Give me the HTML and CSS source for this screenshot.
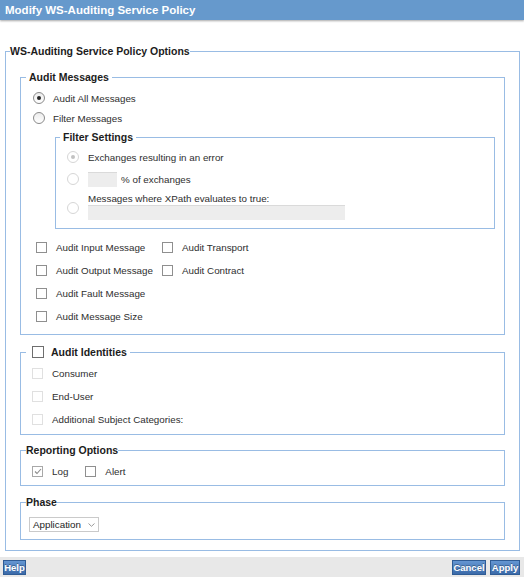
FILE: index.html
```html
<!DOCTYPE html>
<html lang="en">
<head>
<meta charset="utf-8">
<title>Modify WS-Auditing Service Policy</title>
<link rel="stylesheet" href="styles.css">
</head>
<body>
  <div class="titlebar">Modify WS-Auditing Service Policy</div>
  <div class="content">
    <fieldset class="fs outer">
      <legend>WS-Auditing Service Policy Options</legend>
      <div class="outer-body">
        <fieldset class="fs msgs">
          <legend>Audit Messages</legend>
          <div class="msgs-body">
            <div class="row"><span class="radio on"></span><span>Audit All Messages</span></div>
            <div class="row"><span class="radio"></span><span>Filter Messages</span></div>
            <fieldset class="fs filter">
              <legend>Filter Settings</legend>
              <div class="filter-body">
                <div class="frow"><span class="radio dis on"></span><span>Exchanges resulting in an error</span></div>
                <div class="frow"><span class="radio dis"></span><span class="tbox pct"></span><span>% of exchanges</span></div>
                <div class="frow xp"><span class="radio dis"></span><div class="xcol"><span class="xlbl">Messages where XPath evaluates to true:</span><span class="tbox xpbox"></span></div></div>
              </div>
            </fieldset>
            <div class="checks">
              <div class="cb-item"><span class="cb"></span><span>Audit Input Message</span></div>
              <div class="cb-item"><span class="cb"></span><span>Audit Transport</span></div>
              <div class="cb-item"><span class="cb"></span><span>Audit Output Message</span></div>
              <div class="cb-item"><span class="cb"></span><span>Audit Contract</span></div>
              <div class="cb-item c1"><span class="cb"></span><span>Audit Fault Message</span></div>
              <div class="cb-item c1"><span class="cb"></span><span>Audit Message Size</span></div>
            </div>
          </div>
        </fieldset>

        <fieldset class="fs ids">
          <legend><span class="lg-inner"><span class="cb dark"></span><span>Audit Identities</span></span></legend>
          <div class="ids-body">
            <div class="irow"><span class="cb dis"></span><span>Consumer</span></div>
            <div class="irow"><span class="cb dis"></span><span>End-User</span></div>
            <div class="irow"><span class="cb dis"></span><span>Additional Subject Categories:</span></div>
          </div>
        </fieldset>

        <fieldset class="fs rep">
          <legend>Reporting Options</legend>
          <div class="rep-body">
            <div class="cb-item"><span class="cb light"><svg width="8" height="7" viewBox="0 0 8 7"><path d="M1 3.5 L3 5.5 L7 1" fill="none" stroke="#8a8a8a" stroke-width="1.1"/></svg></span><span>Log</span></div>
            <div class="cb-item alert"><span class="cb"></span><span>Alert</span></div>
          </div>
        </fieldset>

        <fieldset class="fs phase">
          <legend>Phase</legend>
          <div class="phase-body">
            <div class="select"><span>Application</span><svg width="7" height="4" viewBox="0 0 7 4"><path d="M0.5 0.5 L3.5 3.3 L6.5 0.5" fill="none" stroke="#9a9a9a" stroke-width="1"/></svg></div>
          </div>
        </fieldset>
      </div>
    </fieldset>
  </div>
  <div class="footer">
    <button class="btn help">Help</button>
    <button class="btn cancel">Cancel</button>
    <button class="btn apply">Apply</button>
  </div>
</body>
</html>
```

FILE: styles.css
```css
html, body {
  margin: 0;
  padding: 0;
}

body {
  width: 524px;
  height: 577px;
  display: flex;
  flex-direction: column;
  font-family: "Liberation Sans", Arial, sans-serif;
  font-size: 9.8px;
  color: #2e2e2e;
  background: #fff;
  overflow: hidden;
}

.titlebar {
  flex: none;
  height: 20px;
  line-height: 20px;
  background: #6699cc;
  color: #fff;
  font-weight: bold;
  font-size: 11.5px;
  padding-left: 5px;
  box-shadow: 0 1px 2px rgba(0, 0, 0, 0.35);
  position: relative;
  z-index: 1;
}

.content {
  flex: none;
  padding-top: 24px;
}

.fs {
  border: 1px solid #99bce4;
  margin: 0;
  padding: 0;
  min-width: 0;
}

.fs > legend {
  padding: 0;
  line-height: 14px;
  font-size: 10.5px;
  font-weight: bold;
  color: #1c1c1c;
}

.outer {
  margin: 0 4px 0 5px;
}

.outer > legend {
  margin-left: 4px;
}

.outer-body {
  padding: 12px 14px 10px;
}

.msgs > legend {
  margin-left: 5px;
  padding: 0 3px;
}

.msgs-body {
  padding: 4px 9px 6px 12px;
}

.row {
  display: flex;
  align-items: center;
  height: 20px;
}

.radio {
  flex: none;
  width: 12px;
  height: 12px;
  box-sizing: border-box;
  border: 1px solid #8a8a8a;
  border-radius: 50%;
  background: linear-gradient(#ececec, #fff);
  margin-right: 8px;
  display: flex;
  align-items: center;
  justify-content: center;
}

.radio.on::after {
  content: "";
  width: 4px;
  height: 4px;
  border-radius: 50%;
  background: #262626;
}

.radio.dis {
  border-color: #d6d6d6;
  background: #fff;
}

.radio.dis.on::after {
  background: #c2c2c2;
}

.filter {
  margin: 2px 0 0 22px;
}

.filter > legend {
  margin-left: 4px;
  padding: 0 3px;
}

.filter-body {
  padding: 2px 0 8px 11px;
}

.frow {
  display: flex;
  align-items: center;
  height: 22px;
}

.frow .radio {
  margin-right: 9px;
}

.tbox {
  display: block;
  height: 15px;
  box-sizing: border-box;
  background: #ededed;
  border-top: 1px solid #dadada;
}

.pct {
  width: 29px;
  margin-right: 4px;
}

.frow.xp {
  height: 30px;
  box-sizing: border-box;
  padding-top: 2px;
  align-items: flex-start;
}

.frow.xp .radio {
  align-self: flex-end;
  margin-bottom: 6px;
}

.xcol {
  display: flex;
  flex-direction: column;
}

.xlbl {
  line-height: 13px;
}

.xpbox {
  width: 257px;
}

.checks {
  display: grid;
  grid-template-columns: 126px auto;
  grid-auto-rows: 23px;
  margin: 7px 0 0 3px;
}

.checks .c1 {
  grid-column: 1;
}

.cb-item {
  display: flex;
  align-items: center;
}

.cb {
  flex: none;
  width: 11px;
  height: 11px;
  box-sizing: border-box;
  border: 1px solid #8f8f8f;
  background: #fff;
  margin-right: 9px;
  display: flex;
  align-items: center;
  justify-content: center;
}

.cb.dis {
  border-color: #e0e0e0;
}

.cb.dark {
  width: 12px;
  height: 12px;
  border-color: #6e6e6e;
  margin-right: 7px;
}

.cb.light {
  border-color: #a8a8a8;
}

.ids {
  margin-top: 10px;
}

.ids > legend {
  margin-left: 5px;
  padding: 0 3px 0 6px;
}

.lg-inner {
  display: flex;
  align-items: center;
  height: 14px;
}

.ids-body {
  padding: 3px 0 3px 11px;
}

.irow {
  display: flex;
  align-items: center;
  height: 23px;
}

.rep {
  margin-top: 8px;
}

.rep > legend,
.phase > legend {
  margin-left: 5px;
}

.rep-body {
  display: flex;
  align-items: center;
  height: 23px;
  padding: 3px 0 2px 11px;
}

.alert {
  margin-left: 17px;
}

.phase {
  margin-top: 9px;
}

.phase-body {
  padding: 8px 0 7px 8px;
}

.select {
  width: 70px;
  height: 15px;
  box-sizing: border-box;
  border: 1px solid #cacaca;
  display: flex;
  align-items: center;
  justify-content: space-between;
  padding: 0 3px 0 3px;
  color: #222;
  background: #fff;
}

.footer {
  margin-top: auto;
  flex: none;
  height: 20px;
  box-sizing: border-box;
  background: #e8e8e8;
  display: flex;
  align-items: flex-start;
  padding: 3px 4px 0 3px;
}

.btn {
  height: 15px;
  padding: 0;
  margin: 0;
  box-sizing: border-box;
  border: 1px solid #2f5c95;
  background: linear-gradient(#6496d2, #3b6aa9);
  color: #fff;
  font-family: "Liberation Sans", Arial, sans-serif;
  font-weight: bold;
  font-size: 9.5px;
  line-height: 13px;
  text-align: center;
  text-shadow: 0 -1px 0 rgba(0, 0, 0, 0.3);
}

.help {
  width: 23px;
}

.cancel {
  width: 34px;
  margin-left: auto;
}

.apply {
  width: 30px;
  margin-left: 4px;
}
```
